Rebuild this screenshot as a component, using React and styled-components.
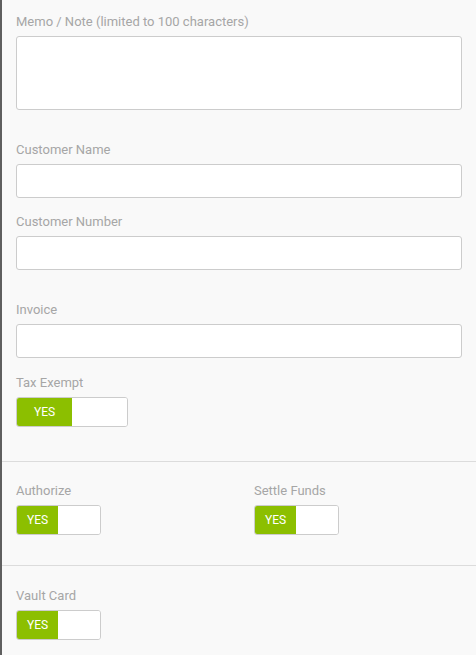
import React from 'react'
import styled, { createGlobalStyle } from 'styled-components'

const GlobalStyle = createGlobalStyle`
    html, body {
        margin: 0;
        padding: 0;
        background: #f9f9f9;
    }
    body {
        font-family: Roboto, "Liberation Sans", Arial, sans-serif;
    }
`

function Toggle({ wide }) {
    return (
        <ToggleBox wide={wide}>
            <ToggleOn wide={wide}>YES</ToggleOn>
            <ToggleOff />
        </ToggleBox>
    )
}

function App() {
    return (
        <>
            <GlobalStyle />
            <Panel>
                <Section>
                    <Field space={14}>
                        <Label>Memo / Note (limited to 100 characters)</Label>
                        <TextArea />
                    </Field>
                    <Field space={32}>
                        <Label>Customer Name</Label>
                        <Input />
                    </Field>
                    <Field space={16}>
                        <Label>Customer Number</Label>
                        <Input />
                    </Field>
                    <Field space={32}>
                        <Label>Invoice</Label>
                        <Input />
                    </Field>
                    <Field space={17}>
                        <Label>Tax Exempt</Label>
                        <Toggle wide />
                    </Field>
                    <Spacer h={34} />
                </Section>
                <Divider />
                <Section>
                    <Columns>
                        <Field space={21}>
                            <Label>Authorize</Label>
                            <Toggle />
                        </Field>
                        <Field space={21}>
                            <Label>Settle Funds</Label>
                            <Toggle />
                        </Field>
                    </Columns>
                    <Spacer h={30} />
                </Section>
                <Divider />
                <Section>
                    <Field space={22}>
                        <Label>Vault Card</Label>
                        <Toggle />
                    </Field>
                    <Spacer h={20} />
                </Section>
            </Panel>
        </>
    )
}

export default App

const Panel = styled.div`
    border-left: 2px solid #5f5f5f;
    min-height: 655px;
    box-sizing: border-box;
    background: #f9f9f9;
`
const Section = styled.div`
    padding: 0 14px;
    display: flex;
    flex-direction: column;
`
const Field = styled.div`
    margin-top: ${p => p.space}px;
    display: flex;
    flex-direction: column;
`
const Label = styled.div`
    font-size: 13px;
    line-height: 16px;
    color: #a6a6a6;
    margin-bottom: 6px;
`
const Input = styled.input`
    box-sizing: border-box;
    width: 100%;
    height: 34px;
    border: 1px solid #cccccc;
    border-radius: 3px;
    background: #fff;
    margin: 0;
    outline: none;
`
const TextArea = styled.textarea`
    box-sizing: border-box;
    width: 100%;
    height: 74px;
    border: 1px solid #cccccc;
    border-radius: 3px;
    background: #fff;
    margin: 0;
    resize: none;
    outline: none;
    display: block;
`
const ToggleBox = styled.div`
    display: flex;
    box-sizing: border-box;
    width: ${p => p.wide ? 112 : 85}px;
    height: 30px;
    border: 1px solid #cccccc;
    border-radius: 3px;
    overflow: hidden;
    background: #fff;
`
const ToggleOn = styled.div`
    width: ${p => p.wide ? 55 : 41}px;
    background: #8cbf00;
    color: #fff;
    font-size: 12px;
    display: flex;
    align-items: center;
    justify-content: center;
`
const ToggleOff = styled.div`
    flex: 1;
    background: #fff;
`
const Columns = styled.div`
    display: grid;
    grid-template-columns: 1fr 1fr;
    column-gap: 30px;
`
const Spacer = styled.div`
    height: ${p => p.h}px;
`
const Divider = styled.div`
    height: 1px;
    background: #dcdcdc;
`
